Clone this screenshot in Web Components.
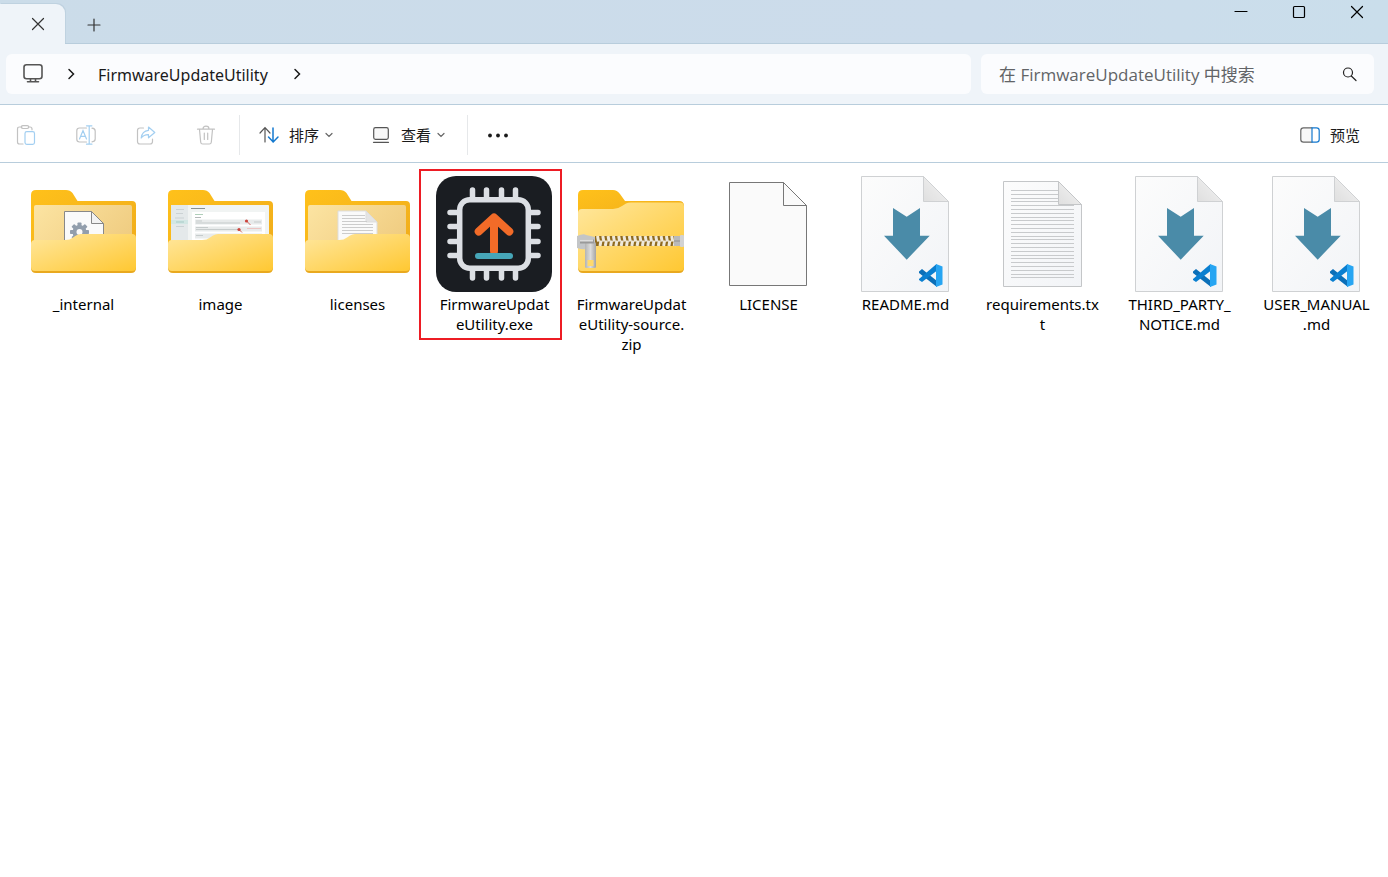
<!DOCTYPE html>
<html lang="zh-CN">
<head>
<meta charset="utf-8">
<title>FirmwareUpdateUtility</title>
<style>
  html, body { margin: 0; min-height: 100%; background: #fff; }
  body { font-family: "Noto Sans", "Noto Sans CJK SC", sans-serif; font-size: 15px; color: #1a1a1a; }
</style>
</head>
<body>
<fx-window>
  <fx-titlebar slot="title"></fx-titlebar>
  <fx-navbar slot="nav" folder="FirmwareUpdateUtility"></fx-navbar>
  <fx-toolbar slot="tools"></fx-toolbar>
  <fx-file kind="folder-gear">_internal</fx-file>
  <fx-file kind="folder-image">image</fx-file>
  <fx-file kind="folder-text">licenses</fx-file>
  <fx-file kind="chip" marked>FirmwareUpdat<wbr>eUtility.exe</fx-file>
  <fx-file kind="zip">FirmwareUpdat<wbr>eUtility-source.<wbr>zip</fx-file>
  <fx-file kind="blank">LICENSE</fx-file>
  <fx-file kind="markdown">README.md</fx-file>
  <fx-file kind="text">requirements.tx<wbr>t</fx-file>
  <fx-file kind="markdown">THIRD_PARTY_<wbr>NOTICE.md</fx-file>
  <fx-file kind="markdown">USER_MANUAL<wbr>.md</fx-file>
</fx-window>

<script>
const range = (n, f) => Array.from({ length: n }, (_, i) => f(i)).join('');

/* Line icons, all on a 20 x 20 grid */
const GLYPHS = {
  close: '<path d="M4.500 4.500l11 11M15.500 4.500l-11 11"/>',
  plus: '<path d="M10 4v12M4 10h12"/>',
  minimize: '<path d="M4 9.500h12"/>',
  maximize: '<rect x="4.500" y="4.500" width="11" height="11" rx="1"/>',
  monitor: '<g stroke-width="1.600"><rect x="1" y="1.700" width="18" height="14" rx="2.500"/><path d="M7.500 16v2.500M12.500 16v2.500M4.500 18.700h11"/></g>',
  chevron: '<path d="M8 5.500l4.500 4.500L8 14.500" stroke-width="1.500"/>',
  down: '<path d="M7 8.500l3 3 3-3"/>',
  search: '<circle cx="8" cy="8.500" r="4.500"/><path d="M11.300 12l4.700 4.500"/>',
  paste: '<g stroke="#c2c2c2"><path d="M6 2H3.500Q1.500 2 1.500 4v13q0 2 2 2H7"/><path d="M12.500 2H14q2 0 2 2v.8"/><rect x="5.300" y=".7" width="7.400" height="2.800" rx="1.400"/></g><rect x="9" y="6.700" width="9.500" height="12.600" rx="1.800" stroke="#a3cff1"/>',
  rename: '<g stroke="#c2c2c2"><path d="M10.500 3H3.500Q.8 3 .8 5.700v8.600Q.8 17 3.500 17h7"/><path d="M16 3.200q3.200.2 3.200 2.800v8q0 2.600-3.200 2.800"/></g><g stroke="#a3cff1"><path d="M3.500 14L7 5.500 10.500 14M4.700 11.300h4.600"/><path d="M13.200 1v18M10.500.8h5.400M10.500 19.200h5.400"/></g>',
  share: '<path d="M7.500 3H4Q1.500 3 1.500 5.500v11Q1.500 19 4 19h10q2.500 0 2.500-2.500V14" stroke="#c2c2c2"/><path d="M12.500 2l6.300 5.500-6.300 5.300V9.700Q8 9.500 5.200 13 6 6 12.500 5.300z" stroke="#a3cff1" stroke-linejoin="round"/>',
  trash: '<g stroke="#c2c2c2"><path d="M1.500 4.200h17M7 4q0-2.800 3-2.800T13 4M3.500 4.500l1.200 12.700q.2 1.800 2 1.800h6.600q1.800 0 2-1.800l1.200-12.700"/><path d="M8.300 8v6.500M11.700 8v6.500"/></g>',
  sort: '<path d="M6 17V3M1 8l5-5.300L11 8" stroke="#555"/><path d="M14 3v14M9.500 12l4.700 5 4.800-5" stroke="#1479cf" stroke-width="1.500"/>',
  view: '<rect x="2.700" y="2.700" width="14.600" height="11.600" rx="1.800" fill="#f8f8f8" stroke="#555"/><path d="M2.500 17.300h15" stroke="#555"/>',
  more: '<g fill="#1a1a1a" stroke="none"><circle cx="3" cy="10.500" r="1.900"/><circle cx="11" cy="10.500" r="1.900"/><circle cx="19" cy="10.500" r="1.900"/></g>',
  preview: '<path d="M12 2.800H3.500Q.8 2.800.8 5.500v9q0 2.700 2.700 2.700H12" fill="#f8f8f8" stroke="#666"/><path d="M12 2.800h4.500q2.700 0 2.700 2.700v9q0 2.700-2.700 2.700H12z" stroke="#1479cf"/>'
};

/* File type pictures, all on a 117 x 116 grid */
const folderBack = `<path d="M6 19q0-5 5-5h30q4 0 6.500 3l5 8H107q4 0 4 4v60H6z" fill="url(#back)"/>
  <rect x="9" y="29" width="98" height="50" rx="2" fill="url(#lining)"/>`;
const folderFront = `<path d="M6 69v23q0 5 5 5h95q5 0 5-5V66z" fill="#e9a91f"/>
  <path d="M6 68q0-4 4-4h30q5 0 8-2.500l3-2q2.500-1.500 5-1.500h51q4 0 4 4v29q0 4-4 4H10q-4 0-4-4z" fill="url(#front)"/>`;
const sheet = (l, t, r, b, f, line, fill, fold) => `<path d="M${l} ${t}H${r - f}L${r} ${t + f}V${b}H${l}z" fill="${fill}" stroke="${line}"/>
  <path d="M${r - f} ${t}V${t + f}H${r}z" fill="${fold}" stroke="${line}" stroke-linejoin="round"/>`;
const vscode = `<g transform="translate(72 88)"><path d="M0 7.500L3 5l15 12v6L0 9z" fill="#0b6fb8"/>
  <path d="M0 15L17.500 0v7L3 18 0 16z" fill="#0a7fd0"/><path d="M17 0l6.500 2.500v18L17 23z" fill="#27a5f2"/></g>`;
const ART = {
  'folder-gear': folderBack + sheet(39.5, 35.5, 78.5, 80, 12, '#888', '#fafafa', '#f2f2f2') +
    `<g transform="translate(54.500 56)" fill="#929eac">${range(8, i => `<rect x="-2" y="-9.500" width="4" height="6" rx=".8" transform="rotate(${i * 45})"/>`)}<circle r="7"/><circle r="3" fill="#fafafa"/></g>` + folderFront,
  'folder-image': folderBack + `<rect x="9" y="29" width="98" height="40" rx="1" fill="#f1f4f3"/><rect x="9" y="29" width="17" height="40" fill="#e4e9ea"/>
    <rect x="30" y="36" width="73" height="30" fill="#fff"/><path d="M29 32.500h14" stroke="#8a9090"/><path d="M33 38.500h8" stroke="#9cc3a8" stroke-width=".8"/><path d="M33 41.500h6" stroke="#a0a6a6" stroke-width=".8"/>
    <rect x="9" y="44" width="17" height="4" fill="#d2e7e4"/><path d="M14 33.500h8M14 37.500h7M13 42h9M14 50.500h8" stroke="#cbd2d4"/><path d="M14 46h8" stroke="#a5c9c5"/>
    <path d="M33 46h67M33 53h67M33 60h67" stroke="#e8ebeb" stroke-width="5"/><path d="M34 45h6M34 47h44M34 51.500h12M34 53.500h42M34 59.500h7M92 46h7" stroke="#b8bebe" stroke-width=".7"/>
    <path d="M85 52.500h14" stroke="#ecc4c2"/><path d="M84.500 45l4 4M77 53.500l3 3" stroke="#d26861"/><g fill="#cc443c"><circle cx="84.500" cy="45" r="1.600"/><circle cx="77" cy="53.500" r="1.600"/></g>` + folderFront,
  'folder-text': folderBack + sheet(39, 35, 78, 80, 11, '#ddd', '#fafafa', '#e4e4e4') +
    `<path d="M43 39.500h23M43 42.500h23M43 45.500h25M43 48.500h31M43 51.500h31M43 54.500h31M43 57.500h31" stroke="#ccc"/>` + folderFront,
  chip: `<rect width="116" height="116" rx="20" fill="#1a1d22"/>
    <g fill="none" stroke="#dcdfe4" stroke-width="5.500" stroke-linecap="round"><rect x="23.700" y="23.700" width="68.600" height="68.600" rx="10"/>
    ${[36.5, 50.5, 65.5, 79.5].map(p => `<path d="M${p} 14v9M${p} 93v9M14 ${p}h9M93 ${p}h9"/>`).join('')}</g>
    <path d="M58 75V42M42.700 55.500L58 41.500l15.300 14" fill="none" stroke="#f26b28" stroke-width="8" stroke-linecap="round" stroke-linejoin="round"/>
    <path d="M42 80h32" stroke="#46a6b8" stroke-width="6" stroke-linecap="round"/>`,
  zip: `<path d="M5 19q0-5 5-5h30q4 0 7 4l5 7h54q5 0 5 5v20H5z" fill="url(#back)"/><path d="M5 60v32q0 5 5 5h96q5 0 5-5V60z" fill="#e9a91f"/>
    <path d="M5 37q0-4 4-4h31q5 0 9-3l4-2.500q2-1 5-1h49q4 0 4 4V91q0 4-4 4H9q-4 0-4-4z" fill="url(#front)"/>
    <rect x="22" y="60" width="81" height="10" fill="#8f6a1e"/>
    <g stroke="#efe9da" stroke-width="3">${range(15, i => `<path d="M${24.5 + i * 5.3} 60l1 5.500M${28 + i * 5.3} 64.500l-1 5.500"/>`)}</g>
    <rect x="101" y="60" width="6" height="10" fill="#b9b9b9"/><path d="M101 65h6" stroke="#8e8e8e"/><rect x="107" y="59" width="4" height="12" rx="1" fill="#d2d2d2"/>
    <path d="M4 60q7-3 9-1l9 2v9l-9 3q-3 1-9-1z" fill="#c3c5c7"/><rect x="12" y="66" width="11" height="26" rx="1.500" fill="url(#metal)"/>
    <rect x="14.500" y="84" width="6" height="6" fill="#ffd96d"/><path d="M7 65.500h14" stroke="#999" stroke-width="4"/><path d="M7 64.500h13" stroke="#ddd" stroke-width="2"/>`,
  blank: sheet(19.5, 6.5, 96.5, 109.5, 23, '#777', '#fafafa', '#fafafa'),
  markdown: sheet(14.5, .5, 101.5, 115.5, 25, '#cfd1d3', 'url(#paper)', 'url(#curl)') +
    `<path d="M46 32l13.700 8.700L73 32v27.700h9.700L59.700 83.700 37 59.700h9z" fill="#4a8ba8"/>` + vscode,
  text: sheet(19.5, 5.5, 97.5, 110.5, 23, '#c4c6c8', 'url(#paper)', 'url(#curl)') +
    `<g stroke="#c8cacc">${range(24, i => `<path d="M27 ${14.5 + Math.round(i * 3.8)}H${i < 4 ? 74 : 90}"/>`)}</g>`
};
const DEFS = `<defs>
  <linearGradient id="back" x2="1" y2="1"><stop stop-color="#ffc11a"/><stop offset="1" stop-color="#eeaa1c"/></linearGradient>
  <linearGradient id="lining" x2="1" y2=".5"><stop stop-color="#fce4a2"/><stop offset="1" stop-color="#f0cd82"/></linearGradient>
  <linearGradient id="front" x2="1" y2="1"><stop stop-color="#ffe79e"/><stop offset="1" stop-color="#ffc832"/></linearGradient>
  <linearGradient id="paper" x2="1" y2="1"><stop stop-color="#fcfcfc"/><stop offset="1" stop-color="#f2f4f7"/></linearGradient>
  <linearGradient id="curl" x1="1" x2="0" y2="1"><stop stop-color="#f4f4f4"/><stop offset="1" stop-color="#dfdfdf"/></linearGradient>
  <linearGradient id="metal" x2="1"><stop stop-color="#b4b4b4"/><stop offset=".5" stop-color="#dcdcdc"/><stop offset="1" stop-color="#a4a4a4"/></linearGradient></defs>`;

const RESET = `button { font: inherit; color: inherit; background: none; border: 0; margin: 0; padding: 0; cursor: default; }
  fx-icon { flex: none; }`;

class Base extends HTMLElement {
  connectedCallback() {
    if (this.shadowRoot) return;
    this.attachShadow({ mode: 'open' }).innerHTML = this.render();
  }
}

customElements.define('fx-icon', class extends Base {
  render() {
    return `<style>:host { display: block; width: 20px; height: 20px; }
      svg { display: block; width: 100%; height: 100%; fill: none; stroke: currentColor; stroke-width: 1.2; stroke-linecap: round; overflow: visible; }</style>
      <svg viewBox="0 0 20 20" aria-hidden="true">${GLYPHS[this.getAttribute('name')]}</svg>`;
  }
});

customElements.define('fx-window', class extends Base {
  render() {
    return `<style>:host { display: flex; flex-direction: column; min-height: 100vh; background: #fff; }
      main { display: grid; grid-template-columns: repeat(auto-fill, 137px); align-items: start; padding: 13px 0 13px 15px; }</style>
      <slot name="title"></slot><slot name="nav"></slot><slot name="tools"></slot><main><slot></slot></main>`;
  }
});

customElements.define('fx-titlebar', class extends Base {
  render() {
    return `<style>${RESET}
      :host { display: flex; align-items: flex-end; height: 44px; background: linear-gradient(90deg, #cbdce9, #ccdceb 70%, #cadeeb); box-shadow: inset 0 -1px #b8cddc; }
      .tab { display: flex; justify-content: flex-end; align-items: center; box-sizing: border-box; width: 65px; height: 40px; padding-right: 17px; background: #eff4f9; border-top-right-radius: 9px; box-shadow: 1px -1px #bfd2e0; }
      .add { margin-left: 19px; height: 38px; color: #333; }
      .add, .caption button { display: flex; align-items: center; justify-content: center; }
      .caption { display: flex; align-self: flex-start; margin-left: auto; padding-right: 2px; color: #000; }
      .caption button { width: 58px; height: 24px; }
      .tab button { color: #333; }</style>
      <div class="tab"><button aria-label="关闭标签页"><fx-icon name="close"></fx-icon></button></div>
      <button class="add" aria-label="新建标签页"><fx-icon name="plus"></fx-icon></button>
      <div class="caption"><button aria-label="最小化"><fx-icon name="minimize"></fx-icon></button><button aria-label="最大化"><fx-icon name="maximize"></fx-icon></button><button aria-label="关闭"><fx-icon name="close"></fx-icon></button></div>`;
  }
});

customElements.define('fx-navbar', class extends Base {
  render() {
    const folder = this.getAttribute('folder');
    return `<style>${RESET}
      :host { display: grid; grid-template-columns: 965fr 393fr; gap: 10px; padding: 10px 14px 10px 6px; background: #eff4f9; border-bottom: 1px solid #b8cddc; }
      nav, form { display: flex; align-items: center; min-width: 0; height: 40px; border-radius: 6px; background: #fbfcfe; box-sizing: border-box; }
      nav { padding-left: 17px; font-size: 16px; }
      nav button { flex: none; }
      .home { color: #555; padding-bottom: 2px; }
      .home + fx-icon { margin: 0 17px 0 18px; }
      .name { margin-right: 19px; line-height: 24px; padding-top: 1px; }
      form { padding: 0 14px 0 18px; }
      input { flex: 1; min-width: 0; font: 17px/24px "Open Sans", "Noto Sans CJK SC", sans-serif; color: #222; border: 0; padding: 1px 0 0; background: none; outline: 0; }
      input::placeholder { color: #626467; opacity: 1; }
      form button { color: #222; }</style>
      <nav aria-label="地址栏"><button class="home" aria-label="此电脑"><fx-icon name="monitor"></fx-icon></button><fx-icon name="chevron"></fx-icon>
      <button class="name">${folder}</button><fx-icon name="chevron"></fx-icon></nav>
      <form role="search"><input type="text" aria-label="搜索" placeholder="在 ${folder} 中搜索"><button type="button" aria-label="搜索"><fx-icon name="search"></fx-icon></button></form>`;
  }
});

customElements.define('fx-toolbar', class extends Base {
  render() {
    const dead = (n, t) => `<button class="dead" disabled aria-label="${t}"><fx-icon name="${n}"></fx-icon></button>`;
    return `<style>${RESET}
      :host { display: flex; align-items: center; height: 58px; padding: 2px 9px 0 6px; box-sizing: border-box; background: #fff; border-bottom: 1px solid #b8cddc; color: #1a1a1a; }
      button { display: flex; align-items: center; justify-content: center; height: 40px; flex: none; }
      .group { display: flex; gap: 20px; padding-right: 10px; }
      .dead { width: 40px; }
      .cmd { padding: 0 19px; gap: 10px; line-height: 20px; }
      .drop { width: 8px; margin-left: -4px; justify-content: center; display: flex; color: #666; }
      .rule { width: 1px; height: 40px; margin-left: 3px; background: #e6e8ea; }
      .preview { margin-left: auto; }</style>
      <div class="group">${dead('paste', '粘贴')}${dead('rename', '重命名')}${dead('share', '共享')}${dead('trash', '删除')}</div>
      <span class="rule"></span>
      <button class="cmd"><fx-icon name="sort"></fx-icon>排序<span class="drop"><fx-icon name="down"></fx-icon></span></button>
      <button class="cmd"><fx-icon name="view"></fx-icon>查看<span class="drop"><fx-icon name="down"></fx-icon></span></button>
      <span class="rule"></span>
      <button class="cmd" aria-label="更多"><fx-icon name="more"></fx-icon></button>
      <button class="cmd preview"><fx-icon name="preview"></fx-icon>预览</button>`;
  }
});

customElements.define('fx-file', class extends Base {
  render() {
    return `<style>${RESET}
      :host { display: block; position: relative; color: #000; }
      button { display: flex; flex-direction: column; align-items: stretch; gap: 2px; width: 100%; padding: 0 10px; }
      svg { display: block; width: 117px; height: 116px; }
      span { line-height: 20px; text-align: center; }
      :host([marked])::after { content: ""; position: absolute; inset: -7px 1px -6px -7px; border: 2px solid #ed1c24; pointer-events: none; }</style>
      <button><svg viewBox="0 0 117 116" aria-hidden="true">${DEFS}${ART[this.getAttribute('kind')]}</svg><span><slot></slot></span></button>`;
  }
});
</script>
</body>
</html>
